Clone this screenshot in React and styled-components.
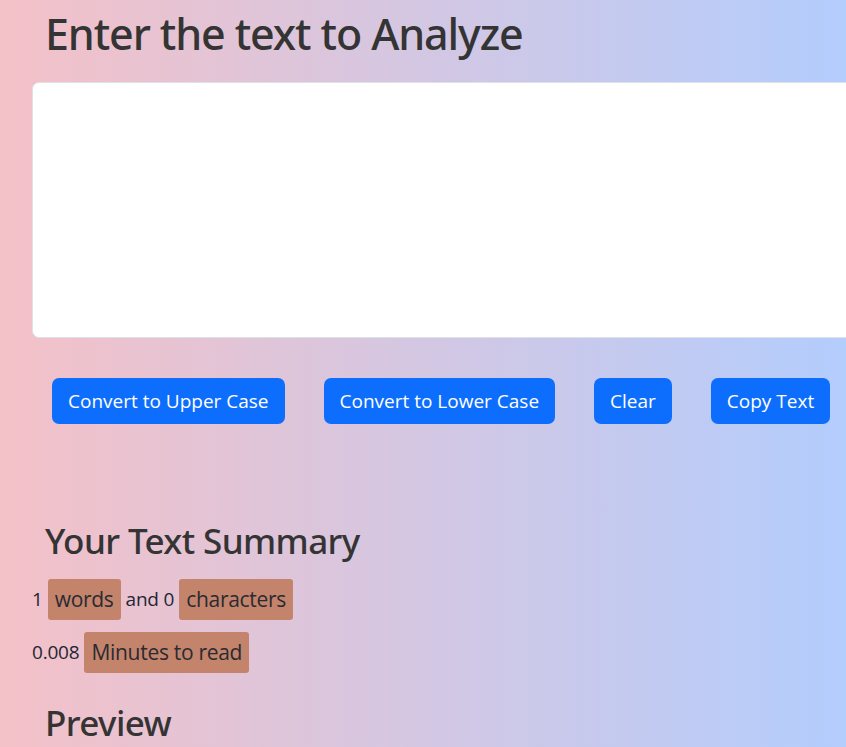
import React from "react";
import styled, { createGlobalStyle } from "styled-components";

const Global = createGlobalStyle`
  html, body { margin: 0; padding: 0; }
  body {
    font-family: "Open Sans", "Noto Sans", sans-serif;
    color: #212529;
  }
`;

const Page = styled.div`
  min-height: 100vh;
  overflow: hidden;
  background: linear-gradient(to right, #f4c1c8, #b3cdfd);
  padding: 0 0 40px 32px;
  box-sizing: border-box;
`;

const Title = styled.h1`
  margin: 0;
  padding: 8px 0 0 13px;
  font-family: "Noto Sans", "Open Sans", sans-serif;
  font-size: 43px;
  font-weight: 500;
  line-height: 1.2;
  color: #343434;
  letter-spacing: -1.1px;
`;

const TextBox = styled.textarea`
  display: block;
  margin-top: 22px;
  width: 900px;
  height: 256px;
  box-sizing: border-box;
  border: 1px solid #dee2e6;
  border-radius: 7px;
  background: #fff;
  resize: none;
  font: inherit;
`;

const ButtonRow = styled.div`
  display: flex;
  gap: 39px;
  margin: 40px 0 0 20px;
`;

const Button = styled.button`
  height: 46px;
  padding: 0 16px;
  border: none;
  border-radius: 7px;
  background: #0d6efd;
  color: #fff;
  font-family: inherit;
  font-size: 19px;
  cursor: pointer;
`;

const Heading = styled.h2`
  margin: ${(p) => p.$top}px 0 0 0;
  padding-left: 13px;
  font-family: "Noto Sans", "Open Sans", sans-serif;
  font-size: 35px;
  font-weight: 500;
  line-height: 1.2;
  color: #343434;
  letter-spacing: -0.6px;
`;

const Line = styled.p`
  margin: ${(p) => p.$top}px 0 0 0;
  display: flex;
  align-items: center;
  gap: 5px;
  font-size: 19px;
  letter-spacing: -0.2px;
  color: #222733;
`;

const Badge = styled.span`
  display: inline-block;
  background: #c3846b;
  border-radius: 3px;
  padding: 0 7px;
  height: 41px;
  line-height: 41px;
  font-size: 21px;
  letter-spacing: -0.3px;
  color: #2a2a33;
`;

export default function App() {
  return (
    <>
      <Global />
      <Page>
        <Title>Enter the text to Analyze</Title>
        <TextBox />
        <ButtonRow>
          <Button>Convert to Upper Case</Button>
          <Button>Convert to Lower Case</Button>
          <Button>Clear</Button>
          <Button>Copy Text</Button>
        </ButtonRow>
        <Heading $top={96}>Your Text Summary</Heading>
        <Line $top={17}>
          1 <Badge>words</Badge> and 0 <Badge>characters</Badge>
        </Line>
        <Line $top={12}>
          0.008 <Badge>Minutes to read</Badge>
        </Line>
        <Heading $top={29}>Preview</Heading>
      </Page>
    </>
  );
}
